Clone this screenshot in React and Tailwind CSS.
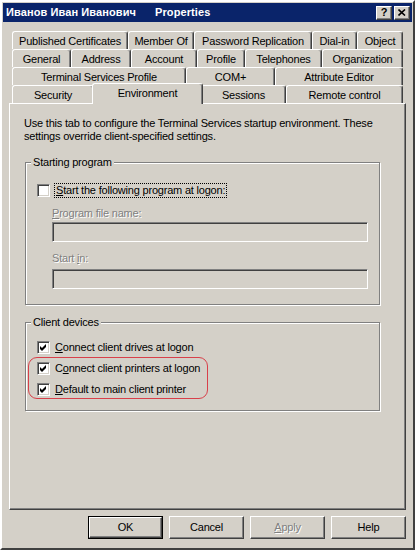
import React from "react";

const rows = [
  [
    { label: "Published Certificates", w: "w-[116px]" },
    { label: "Member Of", w: "w-[66px]" },
    { label: "Password Replication", w: "w-[118px]" },
    { label: "Dial-in", w: "w-[45px]" },
    { label: "Object", w: "w-[46px]" },
  ],
  [
    { label: "General", w: "w-[59px]" },
    { label: "Address", w: "w-[60px]" },
    { label: "Account", w: "w-[66px]" },
    { label: "Profile", w: "w-[48px]" },
    { label: "Telephones", w: "w-[77px]" },
    { label: "Organization", w: "w-[81px]" },
  ],
  [
    { label: "Terminal Services Profile", w: "w-[174px]" },
    { label: "COM+", w: "w-[89px]" },
    { label: "Attribute Editor", w: "w-[128px]" },
  ],
];

const raisedTab =
  "h-[18px] shrink-0 flex items-center justify-center pt-[1px] border-t border-l border-r border-t-white border-l-white border-r-[#404040] rounded-t-[3px] shadow-[inset_-1px_0_0_#808080]";

const disabledText = "text-[#808080] [text-shadow:1px_1px_0_#fff]";

function Tab({ label, w }) {
  return <div className={`${raisedTab} ${w}`}>{label}</div>;
}

function Check({ checked }) {
  return (
    <span className="w-[13px] h-[13px] shrink-0 bg-white border border-t-[#808080] border-l-[#808080] border-r-white border-b-white shadow-[inset_1px_1px_0_#404040,inset_-1px_-1px_0_#d4d0c8] flex items-center justify-center">
      {checked && (
        <svg width="7" height="7" viewBox="0 0 7 7">
          <path d="M0 2 L2 4 L6 0 L6 3 L2 7 L0 5 Z" fill="#000" />
        </svg>
      )}
    </span>
  );
}

function CheckRow({ checked, children, className = "" }) {
  return (
    <div className={`flex items-center h-[14px] gap-[5px] ${className}`}>
      <Check checked={checked} />
      <span>{children}</span>
    </div>
  );
}

function Field() {
  return (
    <div className="w-[316px] h-[20px] bg-[#d4d0c8] border border-t-[#808080] border-l-[#808080] border-r-white border-b-white shadow-[inset_1px_1px_0_#404040,inset_-1px_-1px_0_#d4d0c8]" />
  );
}

function Btn({ children, isDefault, disabled }) {
  const inner =
    "flex-1 flex items-center justify-center border border-t-white border-l-white border-r-[#404040] border-b-[#404040] shadow-[inset_-1px_-1px_0_#808080]";
  if (isDefault) {
    return (
      <div className="w-[75px] h-[23px] flex border border-black">
        <div className={inner}>{children}</div>
      </div>
    );
  }
  return (
    <div className={`w-[75px] h-[23px] flex ${disabled ? disabledText : ""}`}>
      <div className={inner}>{children}</div>
    </div>
  );
}

export default function App() {
  return (
    <div className="w-[415px] h-[550px] bg-[#d4d0c8] text-black text-[11px] leading-[13px] tracking-[-0.2px] font-['Liberation_Sans',Arial,sans-serif] border-2 border-t-white border-l-white border-r-[#404040] border-b-[#404040] p-[1px] flex flex-col">
      {/* Title bar */}
      <div className="h-[19px] bg-[#0a246a] flex items-center justify-between pl-[3px] pr-[2px]">
        <span className="text-white font-bold text-[11px] tracking-[0.1px] whitespace-pre">
          {"Иванов Иван Иванович      Properties"}
        </span>
        <div className="flex gap-[2px]">
          <div className="w-[16px] h-[14px] flex items-center justify-center bg-[#d4d0c8] border border-t-white border-l-white border-r-[#404040] border-b-[#404040] shadow-[inset_-1px_-1px_0_#808080] font-bold text-[11px] leading-none">
            ?
          </div>
          <div className="w-[16px] h-[14px] flex items-center justify-center bg-[#d4d0c8] border border-t-white border-l-white border-r-[#404040] border-b-[#404040] shadow-[inset_-1px_-1px_0_#808080]">
            <svg width="8" height="7" viewBox="0 0 8 7">
              <path d="M0.5 0.5 L7 6.5 M7 0.5 L0.5 6.5" stroke="#000" strokeWidth="1.6" />
            </svg>
          </div>
        </div>
      </div>

      {/* Tabs */}
      <div className="ml-[9px] mt-[9px] flex flex-col">
        {rows.map((row, i) => (
          <div key={i} className="flex">
            {row.map((t) => (
              <Tab key={t.label} {...t} />
            ))}
          </div>
        ))}
        <div className="flex h-[18px]">
          <Tab label="Security" w="w-[82px]" />
          <div className="relative z-10 -ml-[2px] -mr-[2px] -mt-[2px] w-[111px] h-[21px] shrink-0 bg-[#d4d0c8] flex items-start justify-center pt-[3px] border-t border-l border-r border-t-white border-l-white border-r-[#404040] rounded-t-[3px] shadow-[inset_-1px_0_0_#808080]">
            Environment
          </div>
          <Tab label="Sessions" w="w-[85px]" />
          <Tab label="Remote control" w="w-[117px]" />
        </div>
      </div>

      {/* Panel */}
      <div className="ml-[6px] w-[397px] h-[407px] shrink-0 border border-t-white border-l-white border-r-[#404040] border-b-[#404040] shadow-[inset_-1px_-1px_0_#808080] pl-[14px] pt-[13px]">
        <p>
          Use this tab to configure the Terminal Services startup environment. These
          <br />
          settings override client-specified settings.
        </p>

        <fieldset className="ml-[1px] mt-[13px] w-[355px] border border-[#808080] shadow-[inset_1px_1px_0_#fff,1px_1px_0_#fff] pb-[15px]">
          <legend className="ml-[5px] px-[2px] bg-[#d4d0c8] leading-[13px]">Starting program</legend>
          <div className="pl-[11px] mt-[14px]">
            <div className="flex items-center h-[14px] gap-[4px]">
              <Check />
              <span className="border border-dotted border-black px-[1px] h-[15px] leading-[13px]">
                <span className="underline">S</span>tart the following program at logon:
              </span>
            </div>
            <div className="ml-[15px]">
              <div className={`mt-[10px] ${disabledText}`}>
                <span className="underline">P</span>rogram file name:
              </div>
              <div className="mt-[2px]">
                <Field />
              </div>
              <div className={`mt-[10px] ${disabledText}`}>
                Start <span className="underline">i</span>n:
              </div>
              <div className="mt-[4px]">
                <Field />
              </div>
            </div>
          </div>
        </fieldset>

        <fieldset className="ml-[1px] mt-[11px] w-[355px] border border-[#808080] shadow-[inset_1px_1px_0_#fff,1px_1px_0_#fff] pb-[14px]">
          <legend className="ml-[5px] px-[2px] bg-[#d4d0c8] leading-[13px]">Client devices</legend>
          <div className="pl-[11px] mt-[11px]">
            <CheckRow checked>
              <span className="underline">C</span>onnect client drives at logon
            </CheckRow>
            <div className="relative mt-[7px]">
              <div className="absolute -left-[9px] -top-[4px] w-[180px] -bottom-[3px] border border-[#d8404a] rounded-[9px]" />
              <CheckRow checked>
                C<span className="underline">o</span>nnect client printers at logon
              </CheckRow>
              <CheckRow checked className="mt-[7px]">
                <span className="underline">D</span>efault to main client printer
              </CheckRow>
            </div>
          </div>
        </fieldset>
      </div>

      {/* Buttons */}
      <div className="mt-[6px] mr-[6px] flex justify-end gap-[6px]">
        <Btn isDefault>OK</Btn>
        <Btn>Cancel</Btn>
        <Btn disabled>
          <span>
            <span className="underline">A</span>pply
          </span>
        </Btn>
        <Btn>Help</Btn>
      </div>
    </div>
  );
}
